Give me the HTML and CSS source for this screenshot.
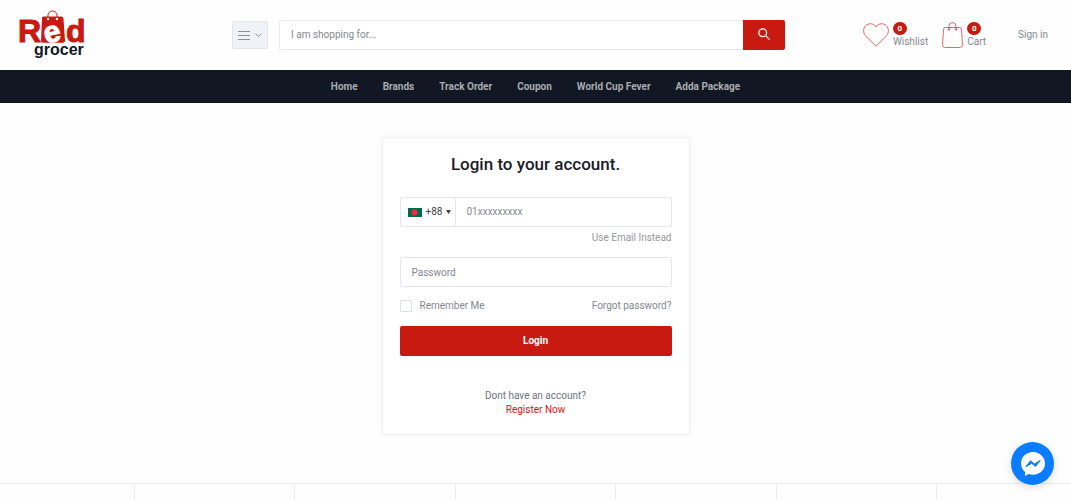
FILE: index.html
```html
<!DOCTYPE html>
<html lang="en">
<head>
    <meta charset="UTF-8">
    <meta name="viewport" content="width=device-width, initial-scale=1.0">
    <title>Login | Red Grocer</title>
    <link rel="stylesheet" href="styles.css">
</head>
<body>
    <header class="top-bar">
        <a href="#" class="logo" aria-label="Red Grocer">
            <svg width="68" height="50" viewBox="0 0 68 50">
                <path d="M30 9V5a4.500 4 0 0 1 9 0v4" fill="none" stroke="#c91a12" stroke-width="1"/>
                <path d="M26 6.500h17a2.500 2.500 0 0 1 2.500 2.300l1.500 22a2 2 0 0 1-2 2H25a2 2 0 0 1-2-2l1-22a2 2 0 0 1 2-2.300z" fill="#c91a12"/>
                <circle cx="30" cy="9" r="1.200" fill="#fff"/>
                <circle cx="39" cy="9" r="1.200" fill="#fff"/>
                <text class="logo-red" x="0" y="32">R</text>
                <text class="logo-red" x="48" y="32">d</text>
                <text class="logo-e" x="26" y="32" transform="rotate(-12 34 24)">e</text>
                <text class="logo-sub" x="16" y="45">grocer</text>
            </svg>
        </a>
        <button class="category-btn" type="button" aria-label="Categories">
            <svg width="12" height="12" viewBox="0 0 12 12" stroke="#8d9096" stroke-width="1"><path d="M0 2.500h12M0 6.500h12M0 10.500h12"/></svg>
            <svg width="7" height="6" viewBox="0 0 7 6" fill="none" stroke="#8d9096" stroke-width="1"><path d="M.5 1.500l3 3 3-3"/></svg>
        </button>
        <form class="search">
            <input type="text" placeholder="I am shopping for..." aria-label="Search">
            <button type="submit" aria-label="Search">
                <svg width="12" height="14" viewBox="0 0 12 14" fill="none" stroke="#fff" stroke-width="1.200"><circle cx="4.700" cy="4.700" r="3.900"/><path d="M7.600 7.600l4 4"/></svg>
            </button>
        </form>
        <div class="header-links">
            <a href="#" class="icon-link">
                <svg width="26" height="24" viewBox="0 0 26 24" fill="none" stroke="#d6423c" stroke-width=".8"><path d="M13 23.300L2.500 12.700C-.2 9.500.1 5.300 2.700 2.700 5.800-.3 10.700.2 13 4c2.300-3.800 7.200-4.300 10.300-1.300 2.600 2.600 2.900 6.800.2 10z"/></svg>
                <span class="icon-text"><span class="count">0</span>Wishlist</span>
            </a>
            <a href="#" class="icon-link">
                <svg width="21" height="26" viewBox="0 0 21 26" fill="none" stroke="#d6423c" stroke-width=".8"><path d="M3.500 5.500h14a2 2 0 0 1 2 2l1 15a3 3 0 0 1-3 3h-14a3 3 0 0 1-3-3l1-15a2 2 0 0 1 2-2z"/><path d="M7 7.500V4.500a3.500 4 0 0 1 7 0v3"/><circle cx="7" cy="7.500" r=".8"/><circle cx="14" cy="7.500" r=".8"/></svg>
                <span class="icon-text"><span class="count">0</span>Cart</span>
            </a>
            <a href="#" class="sign-in">Sign in</a>
        </div>
    </header>

    <nav class="main-nav">
        <a href="#">Home</a>
        <a href="#">Brands</a>
        <a href="#">Track Order</a>
        <a href="#">Coupon</a>
        <a href="#">World Cup Fever</a>
        <a href="#">Adda Package</a>
    </nav>

    <main class="login-section">
        <form class="login-card">
            <h1>Login to your account.</h1>
            <div class="phone-field">
                <svg class="flag" width="14" height="9" viewBox="0 0 14 9"><rect width="14" height="9" fill="#006a4e"/><circle cx="6.500" cy="4.500" r="3" fill="#f42a41"/></svg>
                <select aria-label="Country code">
                    <option>+88</option>
                </select>
                <svg class="caret" width="5" height="4" viewBox="0 0 5 4"><path d="M0 0h5L2.500 4z" fill="#444"/></svg>
                <input type="tel" placeholder="01xxxxxxxxx" aria-label="Phone number">
            </div>
            <a href="#" class="use-email">Use Email Instead</a>
            <input class="password" type="password" placeholder="Password" aria-label="Password">
            <div class="options">
                <label><input type="checkbox">Remember Me</label>
                <a href="#">Forgot password?</a>
            </div>
            <button class="login-btn" type="submit">Login</button>
            <p class="register">Dont have an account?<br><a href="#">Register Now</a></p>
        </form>
    </main>

    <footer class="features">
        <div class="feature-row">
            <div></div>
            <div></div>
            <div></div>
            <div></div>
            <div></div>
        </div>
    </footer>

    <button class="messenger" type="button" aria-label="Open Messenger chat">
        <svg width="26" height="26" viewBox="0 0 26 26"><path d="M13 1C6.200 1 1 6 1 12.600c0 3.500 1.500 6.500 4 8.500V25l3.700-2c1.300.5 2.800.7 4.300.7 6.800 0 12-4.700 12-11.100S19.800 1 13 1z" fill="#fff"/><path d="M5.800 15.800l4.700-6 3.800 3.300 5.900-3.600-4.700 6-3.900-3.300z" fill="#0a7cff" stroke="#0a7cff" stroke-width="1" stroke-linejoin="round"/></svg>
    </button>
</body>
</html>
```

FILE: styles.css
```css
* {
    box-sizing: border-box;
}
body {
    margin: 0;
    background-color: #fefefe;
    color: #85888e;
    font-family: Roboto, "Liberation Sans", sans-serif;
    font-size: 10px;
    line-height: 14px;
    min-height: 100vh;
    display: flex;
    flex-direction: column;
    overflow: hidden;
}
a {
    color: inherit;
    text-decoration: none;
}
svg {
    display: block;
    flex: none;
}
button,
input,
select {
    font: inherit;
    color: inherit;
}
button {
    padding: 0;
    border: none;
    cursor: pointer;
}
input {
    min-width: 0;
    outline: none;
}
::placeholder {
    color: #85888e;
    opacity: 1;
}

/* header */
.top-bar {
    display: flex;
    align-items: center;
    height: 70px;
    padding: 0 23px 0 18px;
}
.logo-red,
.logo-e,
.logo-sub {
    font-family: "Liberation Sans", sans-serif;
    font-weight: bold;
}
.logo-red {
    font-size: 32px;
    fill: #c91a12;
    stroke: #c91a12;
}
.logo-e {
    font-size: 30px;
    fill: #fff;
    stroke: #fff;
}
.logo-sub {
    font-size: 16px;
    fill: #111827;
}
.category-btn {
    display: flex;
    align-items: center;
    justify-content: center;
    gap: 5px;
    width: 36px;
    height: 28px;
    margin-left: 146px;
    border: 1px solid #e2e5ec;
    border-radius: 2px;
    background-color: #f1f2f8;
}
.search {
    display: flex;
    flex: 1;
    height: 30px;
    margin: 0 78px 0 11px;
}
.search input {
    flex: 1;
    padding: 0 11px;
    border: 1px solid #e9eaee;
    border-right: none;
    border-radius: 2px 0 0 2px;
    background-color: #fff;
}
.search button {
    display: flex;
    align-items: center;
    justify-content: center;
    width: 42px;
    border-radius: 0 2px 2px 0;
    background-color: #c91a12;
}
.header-links,
.icon-link {
    display: flex;
    align-items: center;
}
.header-links {
    gap: 14px;
}
.icon-link {
    gap: 4px;
}
.icon-text {
    display: flex;
    flex-direction: column;
    align-items: flex-start;
    line-height: 13px;
}
.count {
    width: 14px;
    height: 13px;
    border-radius: 7px;
    background-color: #c91a12;
    color: #fff;
    font-size: 8px;
    font-weight: bold;
    text-align: center;
}
.sign-in {
    margin-left: 18px;
}

/* navigation */
.main-nav {
    display: flex;
    align-items: center;
    justify-content: center;
    gap: 25px;
    height: 33px;
    background-color: #111823;
    color: #a9acb1;
    font-weight: bold;
}

/* login form */
.login-section {
    flex: 1;
    padding: 34px 0 48px;
}
.login-card {
    display: flex;
    flex-direction: column;
    width: 308px;
    margin: 0 auto;
    padding: 15px 17px 17px;
    border: 1px solid #efeff2;
    border-radius: 3px;
    background-color: #fff;
    box-shadow: 0 0 10px rgba(0, 0, 0, 0.04);
}
.login-card h1 {
    margin: 0 0 22px;
    color: #1b1b28;
    font-size: 17px;
    font-weight: 500;
    line-height: 22px;
    text-align: center;
}
.phone-field,
.password {
    height: 30px;
    border: 1px solid #e6e7ee;
    border-radius: 2px;
    background-color: #fff;
}
.phone-field {
    display: flex;
    align-items: center;
    padding-left: 7px;
}
.phone-field select {
    width: 20px;
    margin-left: 4px;
    padding: 0;
    border: none;
    appearance: none;
    background: none;
    color: #444;
    outline: none;
}
.phone-field input {
    flex: 1;
    align-self: stretch;
    margin-left: 4px;
    padding: 0 11px;
    border: none;
    border-left: 1px solid #e6e7ee;
    background: none;
}
.use-email {
    align-self: flex-end;
    margin: 4px 0 12px;
    color: #96989d;
}
.password {
    padding: 0 11px;
}
.options {
    display: flex;
    align-items: center;
    justify-content: space-between;
    margin: 12px 0 13px;
}
.options label {
    display: flex;
    align-items: center;
    gap: 8px;
}
.options input {
    width: 12px;
    height: 12px;
    margin: 0;
    appearance: none;
    border: 1px solid #dddfe8;
    border-radius: 1px;
}
.options input:checked {
    background-color: #c91a12;
}
.login-btn {
    height: 30px;
    border-radius: 2px;
    background-color: #c91a12;
    color: #fff;
    font-weight: bold;
}
.register {
    margin: 33px 0 0;
    color: #6c737b;
    text-align: center;
}
.register a {
    color: #c91a12;
}

/* bottom feature boxes */
.features {
    border-top: 1px solid #ecedf1;
}
.feature-row {
    display: grid;
    grid-template-columns: repeat(5, 1fr);
    width: 75%;
    height: 16px;
    margin: 0 auto;
    border-left: 1px solid #ecedf1;
}
.feature-row div {
    border-right: 1px solid #ecedf1;
}

.messenger {
    position: fixed;
    right: 17px;
    bottom: 15px;
    display: flex;
    align-items: center;
    justify-content: center;
    width: 43px;
    height: 43px;
    border-radius: 50%;
    background-color: #0a7cff;
    box-shadow: 0 2px 8px rgba(0, 0, 0, 0.15);
}
```
